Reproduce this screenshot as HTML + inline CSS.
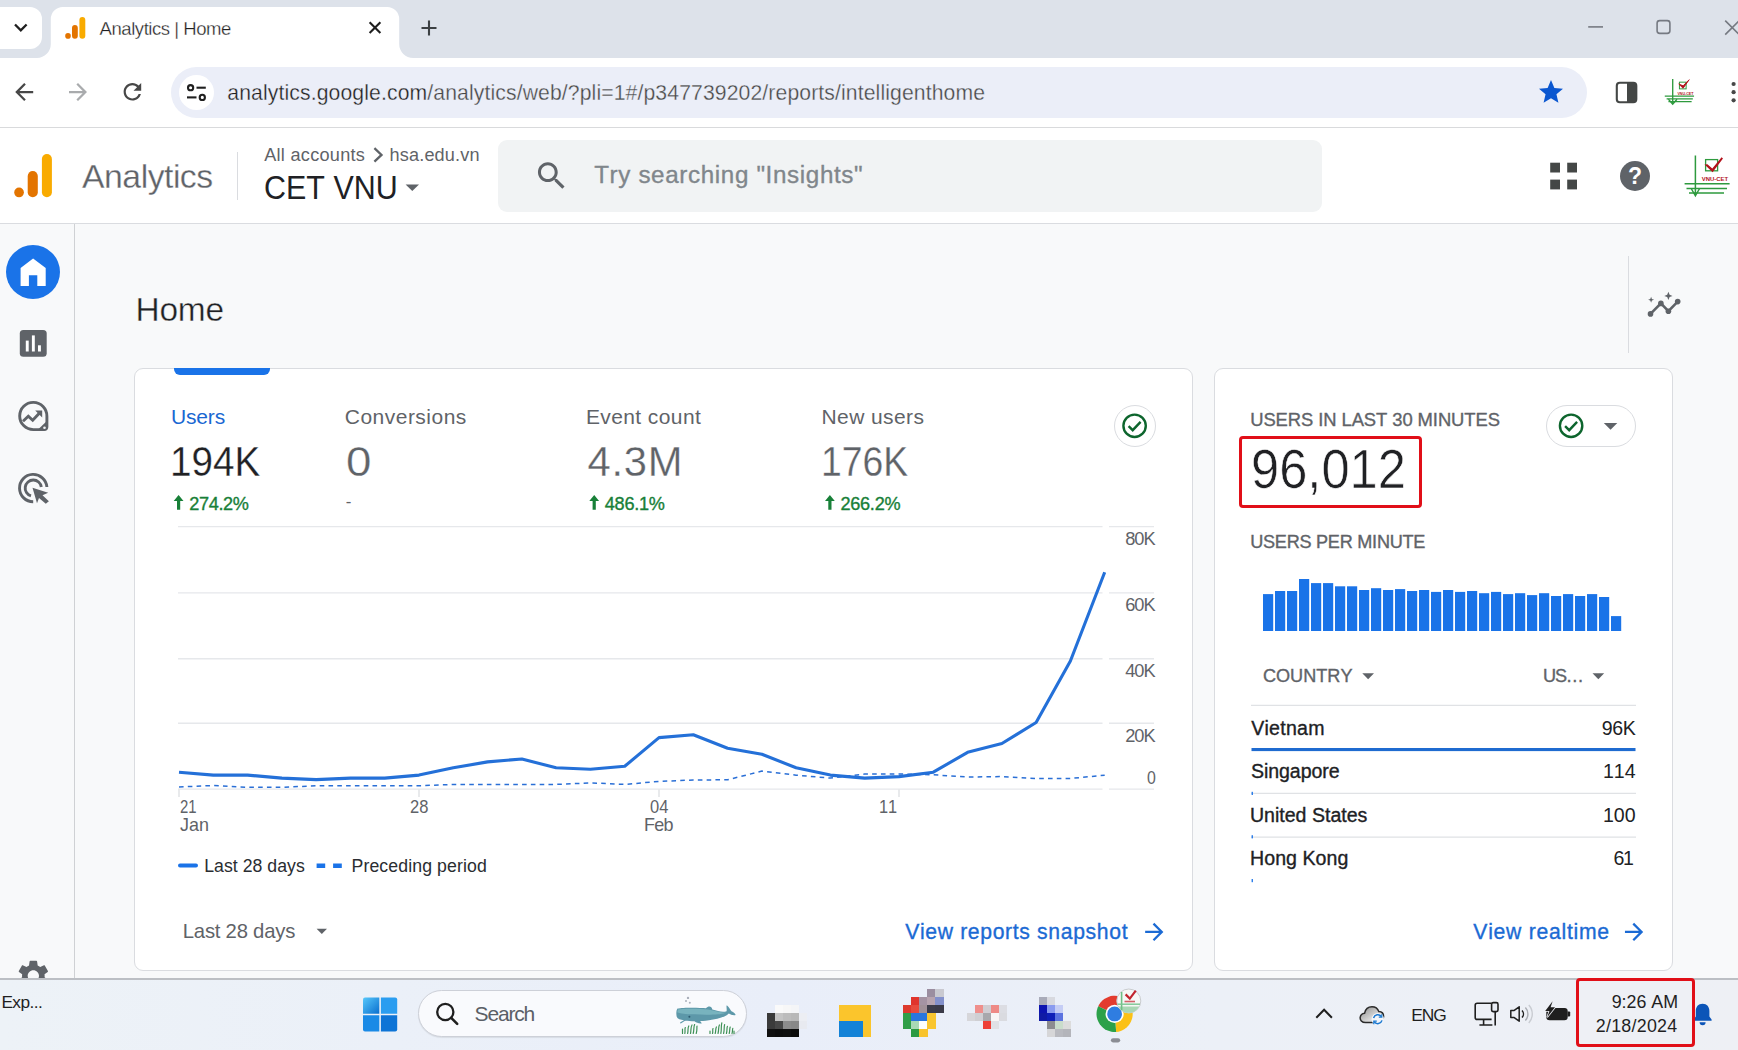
<!DOCTYPE html>
<html lang="en">
<head>
<meta charset="utf-8">
<title>Analytics | Home</title>
<style>
*{box-sizing:border-box;margin:0;padding:0}
html,body{width:1738px;height:1050px;overflow:hidden;background:#f8f9fa;font-family:"Liberation Sans",sans-serif;color:#202124}
body{position:relative}
.a,.t{position:absolute}
.t{white-space:nowrap;line-height:1;font-kerning:none}
svg{position:absolute;overflow:visible}
#tabstrip{left:0;top:0;width:1738px;height:57.7px;background:#dde2ea}
#toolbar{left:0;top:57px;width:1738px;height:71px;background:#fff;border-bottom:1px solid #d9dadc}
#tabsearch{left:-12px;top:7px;width:54px;height:42px;background:#fff;border-radius:12px}
#urlbar{left:171px;top:67px;width:1416px;height:51px;border-radius:26px;background:#ebeef8}
#siteinfo{left:179px;top:75px;width:35px;height:35px;border-radius:50%;background:#fff}
#gahead{left:0;top:128px;width:1738px;height:96px;background:#fff;border-bottom:1px solid #dadce0}
#gasep{left:237px;top:152px;width:1px;height:48px;background:#dadce0}
#gasearch{left:498px;top:140px;width:824px;height:72px;border-radius:9px;background:#f1f3f4}
#nav{left:0;top:224px;width:75px;height:755px;background:#f8f9fa;border-right:1px solid #cfd1d4}
#homebtn{left:6px;top:245px;width:54px;height:54px;border-radius:50%;background:#1a73e8}
#vsep{left:1628px;top:256px;width:1px;height:97px;background:#dadce0}
.card{background:#fff;border:1px solid #dadce0;border-radius:9px}
#card1{left:134px;top:368px;width:1059px;height:603px}
#card2{left:1214px;top:368px;width:459px;height:603px}
#tabind{left:174px;top:368px;width:96px;height:7px;background:#1a73e8;border-radius:0 0 6px 6px}
.ring{border:1px solid #dadce0;background:#fff}
#ring1{left:1114px;top:405px;width:42px;height:42px;border-radius:50%}
#pill{left:1546px;top:405px;width:90px;height:42px;border-radius:21px}
.hl{height:1px;background:#e3e5e8}
.redbox{border:3.5px solid #e10f18;border-radius:4px}
#taskbar{left:0;top:978px;width:1738px;height:72px;background:linear-gradient(90deg,#edf2f7 0%,#e9eef9 45%,#ecf0f7 70%,#eef0f5 100%);border-top:2px solid #bcbfc4}
#tsearch{left:418px;top:990px;width:329px;height:47px;border-radius:24px;background:#f9fafd;border:1px solid #cdd0d8;box-shadow:0 1px 1px rgba(0,0,0,.08)}
</style>
</head>
<body>
<!-- ===== Browser tab strip ===== -->
<div id="toolbar" class="a"></div>
<div id="tabstrip" class="a"></div>
<div id="tabsearch" class="a"></div>
<svg style="left:0;top:0" width="1738" height="60" viewBox="0 0 1738 60">
  <path d="M37 58A14 14 0 0 0 50.8 44V19A12 12 0 0 1 62.8 7H387.2A12 12 0 0 1 399.2 19V44A14 14 0 0 0 413.2 58Z" fill="#fff"/>
  <!-- tab search chevron -->
  <path d="M15 24.5L20.8 30.3L26.6 24.5" fill="none" stroke="#1f1f1f" stroke-width="2.3"/>
  <!-- favicon -->
  <circle cx="68" cy="35.9" r="2.8" fill="#e37400"/>
  <rect x="72" y="25" width="5.8" height="13.7" rx="2.9" fill="#e37400"/>
  <rect x="79.4" y="17" width="5.9" height="21.7" rx="2.95" fill="#f9ab00"/>
  <!-- close tab -->
  <path d="M369.6 22.3L380.4 33.1M380.4 22.3L369.6 33.1" stroke="#1f1f1f" stroke-width="2.1" fill="none"/>
  <!-- new tab -->
  <path d="M421.5 28H436.5M429 20.5V35.5" stroke="#3c4043" stroke-width="2.1" fill="none"/>
  <!-- window controls -->
  <path d="M1588.2 26.9H1603" stroke="#767a82" stroke-width="1.6" fill="none"/>
  <rect x="1657.1" y="20.6" width="12.8" height="12.8" rx="2.6" fill="none" stroke="#767a82" stroke-width="1.6"/>
  <path d="M1725.2 20.6L1739.2 34.6M1739.2 20.6L1725.2 34.6" stroke="#767a82" stroke-width="1.6" fill="none"/>
</svg>
<!-- ===== Toolbar ===== -->
<div id="urlbar" class="a"></div>
<div id="siteinfo" class="a"></div>
<svg style="left:0;top:58px" width="1738" height="70" viewBox="0 58 1738 70">
  <!-- back -->
  <g transform="translate(10.7,78.5) scale(1.125)"><path d="M20 11H7.83l5.59-5.59L12 4l-8 8 8 8 1.41-1.41L7.83 13H20v-2z" fill="#474747"/></g>
  <!-- forward -->
  <g transform="translate(64.5,78.5) scale(1.125)"><path d="M12 4l-1.41 1.41L16.17 11H4v2h12.17l-5.58 5.59L12 20l8-8z" fill="#a9abad"/></g>
  <!-- reload -->
  <g transform="translate(119.2,78.6) scale(1.1)"><path d="M17.65 6.35C16.2 4.9 14.21 4 12 4c-4.42 0-7.99 3.58-7.99 8s3.57 8 7.99 8c3.73 0 6.84-2.55 7.73-6h-2.08c-.82 2.33-3.04 4-5.65 4-3.31 0-6-2.69-6-6s2.69-6 6-6c1.66 0 3.14.69 4.22 1.78L13 11h7V4l-2.35 2.35z" fill="#474747"/></g>
  <!-- site info (tune) -->
  <g fill="none" stroke="#1f1f1f" stroke-width="2.1">
    <circle cx="190.6" cy="87.7" r="2.6"/><path d="M196.5 87.7H205.8"/>
    <circle cx="202.3" cy="97.4" r="2.6"/><path d="M187 97.4H196.5"/>
  </g>
  <!-- star -->
  <g transform="translate(1536.6,77.6) scale(1.2)"><path d="M12 17.27L18.18 21l-1.64-7.03L22 9.24l-7.19-.61L12 2 9.19 8.63 2 9.24l5.46 4.73L5.82 21z" fill="#0b57d0"/></g>
  <!-- side panel -->
  <rect x="1616.8" y="82.7" width="19.5" height="19.6" rx="3" fill="none" stroke="#444746" stroke-width="2.1"/>
  <path d="M1627 82.7H1633.3A3 3 0 0 1 1636.3 85.7V99.3A3 3 0 0 1 1633.3 102.3H1627Z" fill="#444746"/>
  <!-- profile (small VNU-CET logo) -->
  <g transform="translate(1666,78.5) scale(0.61)">
    <g fill="none" stroke="#2e9a3e" stroke-width="2.2">
      <path d="M11 1V40M4 34L11 42L18 34"/>
      <path d="M-2 29H46M1 33.5H44M4 38H42"/>
      <rect x="22" y="6" width="11" height="11" stroke-width="1.6"/>
    </g>
    <path d="M21 9L28 16L38 2L28 12Z" fill="#b3121b" stroke="#b3121b" stroke-width="1.5"/>
  </g>
  <!-- menu dots -->
  <circle cx="1733.6" cy="84" r="2.1" fill="#474747"/><circle cx="1733.6" cy="92.2" r="2.1" fill="#474747"/><circle cx="1733.6" cy="100.3" r="2.1" fill="#474747"/>
</svg>
<!-- ===== GA header ===== -->
<div id="gahead" class="a"></div>
<div id="gasep" class="a"></div>
<div id="gasearch" class="a"></div>
<svg style="left:0;top:128px" width="1738" height="96" viewBox="0 128 1738 96">
  <!-- GA logo -->
  <circle cx="19.05" cy="192.45" r="4.85" fill="#e37400"/>
  <rect x="27.7" y="171" width="10.1" height="26.3" rx="5.05" fill="#e37400"/>
  <rect x="41.9" y="154" width="10" height="43.3" rx="5" fill="#f9ab00"/>
  <!-- breadcrumb chevron -->
  <path d="M374.4 148.2L381.5 154.9L374.4 161.6" fill="none" stroke="#5f6368" stroke-width="2.3"/>
  <!-- property dropdown -->
  <path d="M405.6 184.4H419L412.3 191.1Z" fill="#5f6368"/>
  <!-- search icon -->
  <g transform="translate(533.4,157.7) scale(1.52)"><path d="M15.5 14h-.79l-.28-.27C15.41 12.59 16 11.11 16 9.5 16 5.91 13.09 3 9.5 3S3 5.91 3 9.5 5.91 16 9.5 16c1.61 0 3.09-.59 4.23-1.57l.27.28v.79l5 4.99L20.49 19l-4.99-5zm-6 0C7.01 14 5 11.99 5 9.5S7.01 5 9.5 5 14 7.01 14 9.5 11.99 14 9.5 14z" fill="#5f6368"/></g>
  <!-- apps -->
  <g fill="#444746"><rect x="1550.2" y="162.7" width="9.8" height="9.8"/><rect x="1567.2" y="162.7" width="9.8" height="9.8"/><rect x="1550.2" y="179.6" width="9.8" height="9.8"/><rect x="1567.2" y="179.6" width="9.8" height="9.8"/></g>
  <!-- help -->
  <circle cx="1635" cy="176" r="15" fill="#5f6368"/>
  <text x="1635" y="184.2" text-anchor="middle" font-family="Liberation Sans, sans-serif" font-weight="700" font-size="23" fill="#fff">?</text>
  <!-- avatar: VNU-CET logo -->
  <g transform="translate(1683,154)">
    <g fill="none" stroke="#2e9a3e" stroke-width="1.5">
      <path d="M12.4 1.4V41M8.2 34.5L12.4 41.8L16.6 34.5"/>
      <path d="M1.6 29.7H46.6M3.5 34.4H44M6 39H41"/>
      <rect x="22.6" y="5.6" width="12" height="11.2" stroke-width="1.3"/>
    </g>
    <path d="M21.5 10.6L24.4 10.2L29.3 14.6L38.6 3.2L40 4.4L29.6 18.2Z" fill="#b3121b"/>
    <text x="18.8" y="27.2" font-family="Liberation Sans, sans-serif" font-weight="700" font-size="6.1" fill="#b3121b" textLength="26.3" lengthAdjust="spacingAndGlyphs">VNU-CET</text>
  </g>
</svg>
<!-- small VNU-CET text for toolbar profile -->
<svg style="left:1666px;top:78px" width="30" height="28" viewBox="0 0 30 28">
  <text x="11.4" y="17" font-family="Liberation Sans, sans-serif" font-weight="700" font-size="3.8" fill="#b3121b" textLength="16" lengthAdjust="spacingAndGlyphs">VNU-CET</text>
</svg>

<!-- ===== Left nav ===== -->
<div id="nav" class="a"></div>
<div id="homebtn" class="a"></div>
<div id="vsep" class="a"></div>
<svg style="left:0;top:224px" width="75" height="760" viewBox="0 224 75 760">
  <!-- home -->
  <path d="M20.6 286V267.9L33.1 258.5L45.7 267.9V286H37.3V275.3H28.9V286Z" fill="#fff"/>
  <!-- reports -->
  <rect x="19.8" y="330" width="26.9" height="26.8" rx="3.6" fill="#5f6368"/>
  <g fill="#fff"><rect x="25.8" y="340.6" width="2.9" height="10.9"/><rect x="31.9" y="335.4" width="2.9" height="16.1"/><rect x="38" y="345.3" width="2.9" height="6.2"/></g>
  <!-- explore -->
  <path d="M46.9 416.2A13.6 13.6 0 1 0 33.3 429.6H44.4A2.5 2.5 0 0 0 46.9 427.1Z" fill="none" stroke="#5f6368" stroke-width="2.9"/>
  <path d="M38 429.6H46.9V420.9Z" fill="#5f6368"/>
  <circle cx="44.5" cy="427.7" r="1.3" fill="#f1f3f4"/>
  <path d="M23 421.2L28.3 416.3L32.7 420.3L39.3 413.3" fill="none" stroke="#5f6368" stroke-width="2.9"/>
  <path d="M35.2 410.6H42.2V417.6Z" fill="#5f6368"/>
  <!-- advertising -->
  <path d="M46.9 487A13.7 13.7 0 1 0 33.2 501.8" fill="none" stroke="#5f6368" stroke-width="2.9"/>
  <path d="M41.3 487A8.1 8.1 0 1 0 31 495.9" fill="none" stroke="#5f6368" stroke-width="2.9"/>
  <path d="M32.5 487.8L48.2 492.8L42.5 495.2L48.9 501.2L45.8 503.8L39 498L37 503.2Z" fill="#5f6368"/>
  <!-- settings gear (clipped by taskbar) -->
  <g transform="translate(14.5,957) scale(1.57)"><path d="M19.14 12.94c.04-.3.06-.61.06-.94 0-.32-.02-.64-.07-.94l2.03-1.58c.18-.14.23-.41.12-.61l-1.92-3.32c-.12-.22-.37-.29-.59-.22l-2.39.96c-.5-.38-1.03-.7-1.62-.94l-.36-2.54c-.04-.24-.24-.41-.48-.41h-3.84c-.24 0-.43.17-.47.41l-.36 2.54c-.59.24-1.13.57-1.62.94l-2.39-.96c-.22-.08-.47 0-.59.22L2.74 8.87c-.12.21-.08.47.12.61l2.03 1.58c-.05.3-.09.63-.09.94s.02.64.07.94l-2.03 1.58c-.18.14-.23.41-.12.61l1.92 3.32c.12.22.37.29.59.22l2.39-.96c.5.38 1.03.7 1.62.94l.36 2.54c.05.24.24.41.48.41h3.84c.24 0 .44-.17.47-.41l.36-2.54c.59-.24 1.13-.56 1.62-.94l2.39.96c.22.08.47 0 .59-.22l1.92-3.32c.12-.22.07-.47-.12-.61l-2.01-1.58zM12 15.6c-1.98 0-3.6-1.62-3.6-3.6s1.62-3.6 3.6-3.6 3.6 1.62 3.6 3.6-1.62 3.6-3.6 3.6z" fill="#5f6368"/></g>
</svg>
<!-- insights icon -->
<svg style="left:1640px;top:285px" width="50" height="40" viewBox="1640 285 50 40">
  <path d="M1650.5 313.9L1660.9 303.4L1668.4 311.2L1677.7 301.6" fill="none" stroke="#5f6368" stroke-width="2.6"/>
  <g fill="#5f6368"><circle cx="1650.5" cy="313.9" r="2.8"/><circle cx="1660.9" cy="303.4" r="2.8"/><circle cx="1668.4" cy="311.2" r="2.8"/><circle cx="1677.7" cy="301.6" r="2.8"/>
  <path d="M1668.4 291.8L1669.6 294.7L1672.5 295.9L1669.6 297.1L1668.4 300L1667.2 297.1L1664.3 295.9L1667.2 294.7Z"/>
  <path d="M1651.1 296.7L1651.9 298.9L1654.1 299.7L1651.9 300.5L1651.1 302.7L1650.3 300.5L1648.1 299.7L1650.3 298.9Z"/></g>
</svg>
<!-- ===== Card 1 ===== -->
<div id="card1" class="a card"></div>
<div id="tabind" class="a"></div>
<div id="ring1" class="a ring"></div>
<svg style="left:134px;top:368px" width="1060" height="603" viewBox="134 368 1060 603">
  <g stroke="#e6e8eb" stroke-width="1.4" fill="none">
    <path d="M178 526.6H1102.5M1109 526.6H1154"/>
    <path d="M178 592.9H1102.5M1109 592.9H1154"/>
    <path d="M178 658.8H1102.5M1109 658.8H1154"/>
    <path d="M178 723.2H1102.5M1109 723.2H1154"/>
    <path d="M178 789.1H1102.5M1109 789.1H1154"/>
  </g>
  <path d="M179 789.5V797M419 789.5V797M659 789.5V797M899 789.5V797" stroke="#dadce0" stroke-width="1.2" fill="none"/>
  <path d="M179.0 787.0L213.3 785.5L247.6 787.3L281.9 787.3L316.1 785.8L350.4 785.8L384.7 785.8L419.0 785.8L453.3 784.4L487.6 784.4L521.9 784.4L556.1 784.4L590.4 782.9L624.7 784.4L659.0 781.4L693.3 780.0L727.6 779.8L761.9 771.1L796.1 775.2L830.4 778.1L864.7 774.0L899.0 774.0L933.3 774.8L967.6 777.0L1001.9 776.6L1036.1 778.5L1070.4 778.5L1104.7 775.2" fill="none" stroke="#2a6fd6" stroke-width="1.5" stroke-dasharray="4.6 4.2"/>
  <path d="M179.0 772.2L213.3 775.1L247.6 775.1L281.9 778.1L316.1 779.6L350.4 778.1L384.7 778.1L419.0 775.1L453.3 767.8L487.6 761.9L521.9 759.0L556.1 767.8L590.4 769.3L624.7 766.3L659.0 737.6L693.3 734.7L727.6 748.3L761.9 754.2L796.1 767.8L830.4 775.1L864.7 778.1L899.0 776.6L933.3 772.2L967.6 752.3L1001.9 743.5L1036.1 722.5L1070.4 661.0L1104.7 572.3" fill="none" stroke="#2470d8" stroke-width="3.1" stroke-linejoin="round"/>
  <g fill="none" stroke="#0d652d" stroke-width="2.4"><circle cx="1134.6" cy="425.8" r="11.2"/><path d="M1128.6 426.2L1132.7 430.2L1140.6 421.9"/></g>
  <path d="M180 865.6H196" stroke="#1a73e8" stroke-width="4" stroke-linecap="round" fill="none"/>
  <path d="M316.6 865.8H325.2M333.1 865.8H341.8" stroke="#1a73e8" stroke-width="4.5" fill="none"/>
  <path d="M316.6 928.8H327L321.8 934Z" fill="#5f6368"/>
  <g transform="translate(1140.6,918.3) scale(1.14)"><path d="M12 4l-1.41 1.41L16.17 11H4v2h12.17l-5.58 5.59L12 20l8-8z" fill="#1b6ad4"/></g>
</svg>
<!-- ===== Card 2 ===== -->
<div id="card2" class="a card"></div>
<div id="pill" class="a ring"></div>
<svg style="left:1214px;top:368px" width="460" height="603" viewBox="1214 368 460 603">
  <g fill="none" stroke="#0d652d" stroke-width="2.4"><circle cx="1571.1" cy="425.8" r="11.2"/><path d="M1565.1 426.2L1569.2 430.2L1577.1 421.9"/></g>
  <path d="M1603.8 422.9H1617.3L1610.55 429.7Z" fill="#5f6368"/>
  <g fill="#1a73e8">
    <rect x="1263.0" y="594.1" width="10.2" height="36.9"/>
    <rect x="1275.0" y="591.0" width="10.2" height="40.0"/>
    <rect x="1287.0" y="591.0" width="10.2" height="40.0"/>
    <rect x="1299.0" y="579.0" width="10.2" height="52.0"/>
    <rect x="1311.0" y="583.1" width="10.2" height="47.9"/>
    <rect x="1323.0" y="583.1" width="10.2" height="47.9"/>
    <rect x="1335.0" y="586.3" width="10.2" height="44.7"/>
    <rect x="1347.0" y="586.3" width="10.2" height="44.7"/>
    <rect x="1359.0" y="590.0" width="10.2" height="41.0"/>
    <rect x="1371.0" y="588.2" width="10.2" height="42.8"/>
    <rect x="1383.0" y="590.0" width="10.2" height="41.0"/>
    <rect x="1395.0" y="589.1" width="10.2" height="41.9"/>
    <rect x="1407.0" y="591.0" width="10.2" height="40.0"/>
    <rect x="1419.0" y="590.0" width="10.2" height="41.0"/>
    <rect x="1431.0" y="591.9" width="10.2" height="39.1"/>
    <rect x="1443.0" y="590.0" width="10.2" height="41.0"/>
    <rect x="1455.0" y="591.9" width="10.2" height="39.1"/>
    <rect x="1467.0" y="591.0" width="10.2" height="40.0"/>
    <rect x="1479.0" y="593.2" width="10.2" height="37.8"/>
    <rect x="1491.0" y="591.9" width="10.2" height="39.1"/>
    <rect x="1503.0" y="594.1" width="10.2" height="36.9"/>
    <rect x="1515.0" y="593.2" width="10.2" height="37.8"/>
    <rect x="1527.0" y="595.1" width="10.2" height="35.9"/>
    <rect x="1539.0" y="593.2" width="10.2" height="37.8"/>
    <rect x="1551.0" y="596.0" width="10.2" height="35.0"/>
    <rect x="1563.0" y="594.1" width="10.2" height="36.9"/>
    <rect x="1575.0" y="596.0" width="10.2" height="35.0"/>
    <rect x="1587.0" y="594.1" width="10.2" height="36.9"/>
    <rect x="1599.0" y="597.0" width="10.2" height="34.0"/>
    <rect x="1611.0" y="616.1" width="10.2" height="14.9"/>
  </g>
  <path d="M1362.3 673.3H1374L1368.15 679.2Z" fill="#5f6368"/>
  <path d="M1592.5 673.3H1604.2L1598.35 679.2Z" fill="#5f6368"/>
  <g stroke="#e0e2e5" stroke-width="1.2" fill="none"><path d="M1251 705.4H1636M1251 793.3H1636M1251 837.2H1636"/></g>
  <rect x="1251.5" y="748" width="384" height="3.1" fill="#1f6bd0"/>
  <g fill="#1a73e8"><rect x="1251.6" y="791.8" width="1.3" height="3.2"/><rect x="1251.6" y="835.2" width="1.3" height="3.2"/><rect x="1251.6" y="879" width="1.3" height="3.2"/></g>
  <g transform="translate(1620.4,918.3) scale(1.14)"><path d="M12 4l-1.41 1.41L16.17 11H4v2h12.17l-5.58 5.59L12 20l8-8z" fill="#1b6ad4"/></g>
</svg>
<div class="a redbox" style="left:1239px;top:436.2px;width:183px;height:71.6px"></div>
<!-- ===== Taskbar ===== -->
<div id="taskbar" class="a"></div>
<div id="tsearch" class="a"></div>
<svg style="left:0;top:980px" width="1738" height="70" viewBox="0 980 1738 70">
  <defs><linearGradient id="wg" x1="0" y1="0" x2="1" y2="1"><stop offset="0" stop-color="#57c8fb"/><stop offset="1" stop-color="#0a6fcf"/></linearGradient></defs>
  <g fill="url(#wg)"><path d="M363 999.4a2 2 0 0 1 2-2H379.3V1013.7H363Z"/><path d="M380.9 997.4H395.2a2 2 0 0 1 2 2V1013.7H380.9Z" fill="#2a9df0"/><path d="M363 1015.3H379.3V1031.6H365a2 2 0 0 1-2-2Z" fill="#1a8ae6"/><path d="M380.9 1015.3H397.2V1029.6a2 2 0 0 1-2 2H380.9Z" fill="#0d74d6"/></g>
  <circle cx="445.3" cy="1012" r="8.1" fill="none" stroke="#1f1f1f" stroke-width="2.3"/><path d="M451.2 1017.9L457.2 1023.9" stroke="#1f1f1f" stroke-width="2.6" stroke-linecap="round"/>
  <g>
    <path d="M677.5 1008.6C683 1007.3 700 1007.6 706 1008.2C707.5 1006.4 710 1005.9 711.3 1007.2C712 1008 712.3 1009.2 712.3 1009.6C718 1011.3 723 1012.6 726.6 1011.2C727 1008.5 726 1006.5 726.8 1005.2C729.5 1007.5 730.5 1010.2 731.5 1011.2C733.5 1012.3 735.6 1013.4 735.6 1015C733 1015.8 730.5 1014.2 728.8 1013.4C725 1017.3 716 1019.2 709 1020.2C704 1020.9 701 1021 700 1021.2C701 1022.2 701.8 1022.8 701.6 1023.4C699 1023.8 696.5 1022.7 694.5 1021.2C691 1021.2 688 1021.2 685 1020.8L680.8 1023.6C680 1023.3 680 1022.7 680.4 1022.3L684 1020.2C680.5 1019.8 677.5 1019 676.8 1017C676 1014.5 676.2 1010.2 677.5 1008.6Z" fill="#5d98a9"/>
    <path d="M678 1009.5C684 1008.2 700 1008.5 708 1009.6C716 1011.3 722 1013.3 726 1012.6C721 1015.6 706 1014.5 690 1014.2C684 1014.1 679 1013 677.2 1012.2Z" fill="#82bcc6" opacity=".75"/>
    <circle cx="689.4" cy="1016.7" r="1" fill="#2c5a70"/>
    <g fill="#aab0bb"><circle cx="688" cy="997.9" r="1.2"/><circle cx="686" cy="1001.1" r="1"/><circle cx="689.8" cy="1002.7" r="1"/></g>
    <g stroke="#3f9157" stroke-width="1.2" fill="none" stroke-linecap="round"><path d="M682.5 1033.5V1029M684.8 1033.5C685.5 1031 684.5 1029.5 685.3 1027.5M687.6 1033.5C688.5 1030 687.5 1028 688.8 1026M690.5 1033.5C691.3 1030 690.5 1027 692 1025M693.2 1033.5C694.2 1030 693.5 1027 694.6 1024.6M696.2 1033.5C697.4 1030.5 696.6 1028 697 1026"/><path d="M710 1033.5V1031M712.5 1033.5C713.2 1031.5 712.3 1030 713 1028.6M715.2 1033.5C716 1031 715.4 1029 716.4 1027M718 1033.5C719 1030 718.2 1027.4 719.4 1025M720.8 1033.5C721.8 1029.5 720.8 1026.4 721.8 1022.8M723.6 1033.5C724.6 1030 723.8 1027.4 724.6 1024.6M726.4 1033.5C727.4 1030.4 726.6 1028.4 727.4 1026.4M729.2 1033.5C730 1031 729.4 1029 730.2 1027M732 1033.5C732.8 1031.4 732.2 1030 732.8 1028.4M734 1033.5V1031"/></g>
  </g>
  <g shape-rendering="crispEdges">
    <rect x="775.0" y="1005.0" width="8.2" height="8.2" fill="#fafafa"/><rect x="783.0" y="1005.0" width="8.2" height="8.2" fill="#f7f7f7"/><rect x="791.0" y="1005.0" width="8.2" height="8.2" fill="#f4f5f7"/><rect x="767.0" y="1013.0" width="8.2" height="8.2" fill="#3a3a3a"/><rect x="775.0" y="1013.0" width="8.2" height="8.2" fill="#c4c4c4"/><rect x="783.0" y="1013.0" width="8.2" height="8.2" fill="#bcbcbc"/><rect x="791.0" y="1013.0" width="8.2" height="8.2" fill="#b8b8b8"/><rect x="799.0" y="1013.0" width="8.2" height="8.2" fill="#eceef3"/><rect x="767.0" y="1021.0" width="8.2" height="8.2" fill="#3b3b3b"/><rect x="775.0" y="1021.0" width="8.2" height="8.2" fill="#474747"/><rect x="783.0" y="1021.0" width="8.2" height="8.2" fill="#8c8c8c"/><rect x="791.0" y="1021.0" width="8.2" height="8.2" fill="#888888"/><rect x="799.0" y="1021.0" width="8.2" height="8.2" fill="#e8eaf0"/><rect x="767.0" y="1029.0" width="8.2" height="8.2" fill="#111111"/><rect x="775.0" y="1029.0" width="8.2" height="8.2" fill="#0e0e0e"/><rect x="783.0" y="1029.0" width="8.2" height="8.2" fill="#101010"/><rect x="791.0" y="1029.0" width="8.2" height="8.2" fill="#0c0c0c"/>
    <rect x="839" y="1005" width="32" height="32" fill="#fbc52c"/><rect x="839" y="1021" width="24.2" height="16" fill="#1382d7"/>
    <rect x="927.4" y="989.1" width="8.2" height="8.2" fill="#9b8ea0"/><rect x="935.4" y="989.1" width="8.2" height="8.2" fill="#c9c9d0"/><rect x="911.4" y="997.1" width="8.2" height="8.2" fill="#e0342c"/><rect x="919.4" y="997.1" width="8.2" height="8.2" fill="#a493a3"/><rect x="927.4" y="997.1" width="8.2" height="8.2" fill="#b7a4b0"/><rect x="935.4" y="997.1" width="8.2" height="8.2" fill="#8390cb"/><rect x="903.4" y="1005.1" width="8.2" height="8.2" fill="#dd3a2d"/><rect x="911.4" y="1005.1" width="8.2" height="8.2" fill="#e84a3c"/><rect x="919.4" y="1005.1" width="8.2" height="8.2" fill="#a09098"/><rect x="927.4" y="1005.1" width="8.2" height="8.2" fill="#3c3c4a"/><rect x="935.4" y="1005.1" width="8.2" height="8.2" fill="#3a3a48"/><rect x="903.4" y="1013.1" width="8.2" height="8.2" fill="#2f9e48"/><rect x="911.4" y="1013.1" width="8.2" height="8.2" fill="#2a76dc"/><rect x="919.4" y="1013.1" width="8.2" height="8.2" fill="#2a76dc"/><rect x="927.4" y="1013.1" width="8.2" height="8.2" fill="#f9c52e"/><rect x="903.4" y="1021.1" width="8.2" height="8.2" fill="#2f9e48"/><rect x="911.4" y="1021.1" width="8.2" height="8.2" fill="#a9d9b5"/><rect x="919.4" y="1021.1" width="8.2" height="8.2" fill="#fdfefd"/><rect x="927.4" y="1021.1" width="8.2" height="8.2" fill="#f9c52e"/><rect x="911.4" y="1029.1" width="8.2" height="8.2" fill="#2c9a42"/><rect x="919.4" y="1029.1" width="8.2" height="8.2" fill="#f8c32c"/>
    <rect x="975.1" y="1005.0" width="8.2" height="8.2" fill="#ef8f8c"/><rect x="983.1" y="1005.0" width="8.2" height="8.2" fill="#d0cdd2"/><rect x="991.1" y="1005.0" width="8.2" height="8.2" fill="#ee8a86"/><rect x="999.1" y="1005.0" width="8.2" height="8.2" fill="#dcdde3"/><rect x="967.1" y="1013.0" width="8.2" height="8.2" fill="#d6d6da"/><rect x="975.1" y="1013.0" width="8.2" height="8.2" fill="#cfcfd3"/><rect x="983.1" y="1013.0" width="8.2" height="8.2" fill="#a8a8ac"/><rect x="991.1" y="1013.0" width="8.2" height="8.2" fill="#f8f6f6"/><rect x="999.1" y="1013.0" width="8.2" height="8.2" fill="#dadbe0"/><rect x="983.1" y="1021.0" width="8.2" height="8.2" fill="#ee4037"/><rect x="991.1" y="1021.0" width="8.2" height="8.2" fill="#e0e1e6"/>
    <rect x="1039.0" y="997.2" width="8.2" height="8.2" fill="#a9abb9"/><rect x="1047.0" y="997.2" width="8.2" height="8.2" fill="#d8d9df"/><rect x="1039.0" y="1005.2" width="8.2" height="8.2" fill="#0d14b0"/><rect x="1047.0" y="1005.2" width="8.2" height="8.2" fill="#8a9bef"/><rect x="1055.0" y="1005.2" width="8.2" height="8.2" fill="#c5cdf5"/><rect x="1039.0" y="1013.2" width="8.2" height="8.2" fill="#101aa5"/><rect x="1047.0" y="1013.2" width="8.2" height="8.2" fill="#0f1fb8"/><rect x="1055.0" y="1013.2" width="8.2" height="8.2" fill="#5b73e0"/><rect x="1047.0" y="1021.2" width="8.2" height="8.2" fill="#8c8c90"/><rect x="1055.0" y="1021.2" width="8.2" height="8.2" fill="#c9dccb"/><rect x="1063.0" y="1021.2" width="8.2" height="8.2" fill="#dcdcdc"/><rect x="1047.0" y="1029.2" width="8.2" height="8.2" fill="#d6d6d8"/><rect x="1055.0" y="1029.2" width="8.2" height="8.2" fill="#b9bac0"/><rect x="1063.0" y="1029.2" width="8.2" height="8.2" fill="#b4b5bb"/>
  </g>
  <path d="M1114.6 1013.9L1098.20 1006.25A18.1 18.1 0 0 1 1129.43 1003.52Z" fill="#e33b2e"/><path d="M1114.6 1013.9L1129.43 1003.52A18.1 18.1 0 0 1 1116.18 1031.93Z" fill="#fbc116"/><path d="M1114.6 1013.9L1116.18 1031.93A18.1 18.1 0 0 1 1098.20 1006.25Z" fill="#2ca14a"/>
  <circle cx="1114.6" cy="1013.9" r="9.1" fill="#fff"/><circle cx="1114.6" cy="1013.9" r="7.4" fill="#2f7de1"/>
  <circle cx="1128.8" cy="1001" r="12" fill="#f6f8f6" stroke="#c9cccf" stroke-width="1"/>
  <path d="M1118.5 1006.5H1139.1A12 12 0 0 1 1131 1012.8H1126A12 12 0 0 1 1118.5 1006.5Z" fill="#a9d7b4"/><path d="M1121.6 992V1010" stroke="#6fbf85" stroke-width="1.6"/><path d="M1117.5 1004.2H1140" stroke="#7cc592" stroke-width="1.4"/>
  <path d="M1125.6 994.4L1129.8 998.6L1135.8 990.6" fill="none" stroke="#c2262e" stroke-width="2.2"/><path d="M1124.5 1001.5H1135" stroke="#d4606a" stroke-width="1.6"/>
  <rect x="1110.9" y="1038.2" width="9.3" height="4.2" rx="2.1" fill="#8b8d94"/>
  <path d="M1316.3 1017.8L1324.1 1009.8L1331.9 1017.8" fill="none" stroke="#1f1f1f" stroke-width="2"/>
  <defs><linearGradient id="cg" x1="0" y1="0" x2="1" y2="1"><stop offset="0" stop-color="#8c8c8c"/><stop offset=".6" stop-color="#d8d8d8"/><stop offset="1" stop-color="#f4f4f4"/></linearGradient></defs>
  <path d="M1365.6 1022.6C1361.8 1022.6 1359.8 1020 1360.2 1017.3C1360.6 1014.8 1362.6 1013.4 1364.6 1013.2C1365.4 1009.4 1368.4 1006.8 1372 1006.8C1375.4 1006.8 1377.8 1008.8 1378.8 1011.6C1381.6 1011.8 1383.6 1013.8 1383.6 1016.4C1383.6 1019.8 1381 1022.6 1378 1022.6Z" fill="url(#cg)" stroke="#2b2b2b" stroke-width="1.5"/>
  <circle cx="1377.8" cy="1019.2" r="6.2" fill="#f2f5fa"/><path d="M1373.6 1018A4.4 4.4 0 0 1 1381.4 1016.6M1382 1020.4A4.4 4.4 0 0 1 1374.2 1021.8" fill="none" stroke="#1b78d0" stroke-width="1.5"/><path d="M1381.8 1014.2V1017.2H1378.8M1373.8 1024.2V1021.2H1376.8" fill="none" stroke="#1b78d0" stroke-width="1.2"/>
  <g fill="none" stroke="#1f1f1f" stroke-width="1.6"><path d="M1491.2 1003.2H1477.2A2 2 0 0 0 1475.2 1005.2V1017.4A2 2 0 0 0 1477.2 1019.4H1491.6"/><path d="M1483.6 1019.6V1024.6M1479.4 1025H1492.4M1495.2 1011.8V1025.6"/><rect x="1491.6" y="1002.6" width="6.4" height="9" rx="1.6" fill="#e9edf5"/></g>
  <path d="M1510.8 1010.4H1514.2L1519.2 1006.8V1021.2L1514.2 1017.6H1510.8Z" fill="none" stroke="#1f1f1f" stroke-width="1.5" stroke-linejoin="round"/><path d="M1522 1010.4A5.2 5.2 0 0 1 1522 1017.6" fill="none" stroke="#1f1f1f" stroke-width="1.5"/><path d="M1525.4 1007.6A9.4 9.4 0 0 1 1525.4 1020.4" fill="none" stroke="#a9acb2" stroke-width="1.4"/><path d="M1528.8 1005A13.4 13.4 0 0 1 1528.8 1023" fill="none" stroke="#c9ccd2" stroke-width="1.4"/>
  <rect x="1547" y="1008.6" width="20" height="11" rx="2.6" fill="#1f1f1f" stroke="#1f1f1f" stroke-width="1.4"/><path d="M1567.6 1011.6H1569.2A1 1 0 0 1 1570.2 1012.6V1015.6A1 1 0 0 1 1569.2 1016.6H1567.6Z" fill="#1f1f1f"/><path d="M1552.6 1001.2L1545.2 1011H1549.4L1547.2 1017.2L1555 1007.2H1550.6Z" fill="#1f1f1f" stroke="#eef0f5" stroke-width="1.6" paint-order="stroke"/>
  <path d="M1702.6 1003.8C1698.2 1003.8 1695.8 1007 1695.8 1011V1016.4L1693.6 1019.6V1020.8H1711.6V1019.6L1709.4 1016.4V1011C1709.4 1007 1707 1003.8 1702.6 1003.8Z" fill="#0c55b8"/><path d="M1699.6 1022.2A3 3 0 0 0 1705.6 1022.2Z" fill="#0c55b8"/>
</svg>
<div class="a redbox" style="left:1576px;top:978px;width:118.8px;height:69px;background:#eef0f5"></div>
<!-- ===== Text ===== -->
<div class="t" style="left:99.6px;top:18px;line-height:21px;font-size:18.55px;letter-spacing:-0.46px;color:#1f1f1f;-webkit-text-stroke:0.3px #fff">Analytics | Home</div>
<div class="t" style="left:227.3px;top:81px;line-height:23px;font-size:21.16px;letter-spacing:0.12px;color:#474747;-webkit-text-stroke:0.3px #ebeef8"><span style="color:#1f1f1f">analytics.google.com</span>/analytics/web/?pli=1#/p347739202/reports/intelligenthome</div>
<div class="t" style="left:82.1px;top:157px;line-height:38px;font-size:33.77px;letter-spacing:-0.51px;color:#5f6368;-webkit-text-stroke:0.3px #fff">Analytics</div>
<div class="t" style="left:264.2px;top:145px;line-height:20px;font-size:18.12px;letter-spacing:0.28px;color:#5f6368">All accounts</div>
<div class="t" style="left:389.6px;top:145px;line-height:20px;font-size:18.12px;letter-spacing:0.14px;color:#5f6368">hsa.edu.vn</div>
<div class="t" style="left:263.6px;top:169px;line-height:37px;font-size:32.61px;letter-spacing:0.00px;color:#202124;transform-origin:0 0;transform:scaleX(0.934)">CET VNU</div>
<div class="t" style="left:594.2px;top:161px;line-height:27px;font-size:24.20px;letter-spacing:0.64px;color:#80868b;-webkit-text-stroke:.35px #80868b">Try searching "Insights"</div>
<div class="t" style="left:135.5px;top:291px;line-height:37px;font-size:33.48px;letter-spacing:-0.22px;color:#202124;-webkit-text-stroke:0.4px #f8f9fa">Home</div>
<div class="t" style="left:170.9px;top:405px;line-height:23px;font-size:21.01px;letter-spacing:-0.13px;color:#1967d2">Users</div>
<div class="t" style="left:169.6px;top:438px;line-height:47px;font-size:41.74px;letter-spacing:0.00px;color:#202124;-webkit-text-stroke:0.3px #fff;transform-origin:0 0;transform:scaleX(0.926)">194K</div>
<div class="t" style="left:189.2px;top:494px;line-height:20px;font-size:18.12px;letter-spacing:-0.34px;color:#188038;-webkit-text-stroke:.35px #188038">274.2%</div>
<div class="t" style="left:344.8px;top:405px;line-height:23px;font-size:21.01px;letter-spacing:0.48px;color:#5f6368">Conversions</div>
<div class="t" style="left:346.1px;top:437px;line-height:48px;font-size:42.61px;letter-spacing:0.00px;color:#5f6368;-webkit-text-stroke:0.3px #fff;transform-origin:0 0;transform:scaleX(1.073)">0</div>
<div class="t" style="left:345.8px;top:492px;line-height:19px;font-size:16.96px;letter-spacing:0.00px;color:#5f6368">-</div>
<div class="t" style="left:585.9px;top:405px;line-height:23px;font-size:21.01px;letter-spacing:0.40px;color:#5f6368">Event count</div>
<div class="t" style="left:587.6px;top:438px;line-height:47px;font-size:41.74px;letter-spacing:0.70px;color:#5f6368;-webkit-text-stroke:0.3px #fff">4.3M</div>
<div class="t" style="left:604.8px;top:494px;line-height:20px;font-size:18.12px;letter-spacing:-0.28px;color:#188038;-webkit-text-stroke:.35px #188038">486.1%</div>
<div class="t" style="left:821.5px;top:405px;line-height:23px;font-size:21.01px;letter-spacing:0.40px;color:#5f6368">New users</div>
<div class="t" style="left:820.6px;top:438px;line-height:47px;font-size:41.74px;letter-spacing:0.00px;color:#5f6368;-webkit-text-stroke:0.3px #fff;transform-origin:0 0;transform:scaleX(0.895)">176K</div>
<div class="t" style="left:840.5px;top:494px;line-height:20px;font-size:18.12px;letter-spacing:-0.28px;color:#188038;-webkit-text-stroke:.35px #188038">266.2%</div>
<div class="t" style="left:1125.3px;top:528px;line-height:21px;font-size:18.26px;letter-spacing:-1.10px;color:#5f6368">80K</div>
<div class="t" style="left:1125.3px;top:594px;line-height:21px;font-size:18.26px;letter-spacing:-1.10px;color:#5f6368">60K</div>
<div class="t" style="left:1125.3px;top:660px;line-height:21px;font-size:18.26px;letter-spacing:-1.10px;color:#5f6368">40K</div>
<div class="t" style="left:1125.3px;top:725px;line-height:21px;font-size:18.26px;letter-spacing:-1.10px;color:#5f6368">20K</div>
<div class="t" style="left:1146.5px;top:767px;line-height:21px;font-size:18.26px;letter-spacing:0.00px;color:#5f6368;transform-origin:0 0;transform:scaleX(0.870)">0</div>
<div class="t" style="left:180.0px;top:797px;line-height:20px;font-size:17.97px;letter-spacing:0.00px;color:#5f6368;transform-origin:0 0;transform:scaleX(0.830)">21</div>
<div class="t" style="left:180.0px;top:815px;line-height:20px;font-size:17.97px;letter-spacing:0.01px;color:#5f6368">Jan</div>
<div class="t" style="left:409.8px;top:797px;line-height:20px;font-size:17.97px;letter-spacing:0.00px;color:#5f6368;transform-origin:0 0;transform:scaleX(0.920)">28</div>
<div class="t" style="left:649.5px;top:797px;line-height:20px;font-size:17.97px;letter-spacing:0.00px;color:#5f6368;transform-origin:0 0;transform:scaleX(0.920)">04</div>
<div class="t" style="left:644.0px;top:815px;line-height:20px;font-size:17.97px;letter-spacing:-0.78px;color:#5f6368">Feb</div>
<div class="t" style="left:878.7px;top:797px;line-height:20px;font-size:17.97px;letter-spacing:0.00px;color:#5f6368;transform-origin:0 0;transform:scaleX(0.911)">11</div>
<div class="t" style="left:204.2px;top:856px;line-height:20px;font-size:17.68px;letter-spacing:0.03px;color:#2a2d31">Last 28 days</div>
<div class="t" style="left:351.5px;top:856px;line-height:20px;font-size:17.68px;letter-spacing:0.11px;color:#2a2d31">Preceding period</div>
<div class="t" style="left:182.8px;top:920px;line-height:22px;font-size:20.29px;letter-spacing:-0.23px;color:#5f6368">Last 28 days</div>
<div class="t" style="left:905.2px;top:920px;line-height:23px;font-size:21.16px;letter-spacing:0.65px;color:#1b6ad4;-webkit-text-stroke:.35px #1b6ad4">View reports snapshot</div>
<div class="t" style="left:1250.2px;top:409px;line-height:21px;font-size:18.41px;letter-spacing:-0.08px;color:#5f6368;-webkit-text-stroke:.35px #5f6368">USERS IN LAST 30 MINUTES</div>
<div class="t" style="left:1251.0px;top:438px;line-height:62px;font-size:54.78px;letter-spacing:0.00px;color:#202124;-webkit-text-stroke:0.6px #fff;transform-origin:0 0;transform:scaleX(0.925)">96,012</div>
<div class="t" style="left:1250.2px;top:532px;line-height:20px;font-size:18.12px;letter-spacing:-0.26px;color:#5f6368;-webkit-text-stroke:.35px #5f6368">USERS PER MINUTE</div>
<div class="t" style="left:1262.9px;top:666px;line-height:20px;font-size:18.12px;letter-spacing:0.01px;color:#5f6368;-webkit-text-stroke:.35px #5f6368">COUNTRY</div>
<div class="t" style="left:1543.1px;top:666px;line-height:20px;font-size:18.12px;letter-spacing:-1.23px;color:#5f6368;-webkit-text-stroke:.35px #5f6368">US…</div>
<div class="t" style="left:1251.2px;top:717px;line-height:22px;font-size:19.57px;letter-spacing:0.25px;color:#202124;-webkit-text-stroke:.35px #202124">Vietnam</div>
<div class="t" style="left:1601.7px;top:717px;line-height:22px;font-size:19.57px;letter-spacing:-0.37px;color:#202124">96K</div>
<div class="t" style="left:1251.0px;top:760px;line-height:22px;font-size:19.57px;letter-spacing:-0.08px;color:#202124;-webkit-text-stroke:.35px #202124">Singapore</div>
<div class="t" style="left:1603.0px;top:760px;line-height:22px;font-size:19.57px;letter-spacing:-0.02px;color:#202124">114</div>
<div class="t" style="left:1250.0px;top:804px;line-height:22px;font-size:19.57px;letter-spacing:-0.01px;color:#202124;-webkit-text-stroke:.35px #202124">United States</div>
<div class="t" style="left:1603.0px;top:804px;line-height:22px;font-size:19.57px;letter-spacing:-0.02px;color:#202124">100</div>
<div class="t" style="left:1250.0px;top:847px;line-height:22px;font-size:19.57px;letter-spacing:0.06px;color:#202124;-webkit-text-stroke:.35px #202124">Hong Kong</div>
<div class="t" style="left:1613.6px;top:847px;line-height:22px;font-size:19.57px;letter-spacing:-1.47px;color:#202124">61</div>
<div class="t" style="left:1473.3px;top:920px;line-height:23px;font-size:21.16px;letter-spacing:0.73px;color:#1b6ad4;-webkit-text-stroke:.35px #1b6ad4">View realtime</div>
<div class="t" style="left:1.4px;top:992px;line-height:20px;font-size:17.25px;letter-spacing:-0.55px;color:#1f1f1f">Exp...</div>
<div class="t" style="left:474.6px;top:1002px;line-height:23px;font-size:21.01px;letter-spacing:-1.17px;color:#5b5f66">Search</div>
<div class="t" style="left:1411.3px;top:1005px;line-height:20px;font-size:17.39px;letter-spacing:-1.07px;color:#1f1f1f">ENG</div>
<div class="t" style="left:1611.7px;top:992px;line-height:20px;font-size:17.83px;letter-spacing:0.00px;color:#1f1f1f">9:26 AM</div>
<div class="t" style="left:1595.8px;top:1016px;line-height:20px;font-size:17.83px;letter-spacing:0.26px;color:#1f1f1f">2/18/2024</div>
<svg style="left:0;top:490px" width="1000" height="30" viewBox="0 490 1000 30"><g fill="#188038"><path d="M178.6 494.9L183.5 501H180.2V509.8H177.0V501H173.7Z"/><path d="M594.2 494.9L599.1 501H595.8V509.8H592.6V501H589.3Z"/><path d="M829.9 494.9L834.8 501H831.5V509.8H828.3V501H825.0Z"/></g></svg>
</body>
</html>
